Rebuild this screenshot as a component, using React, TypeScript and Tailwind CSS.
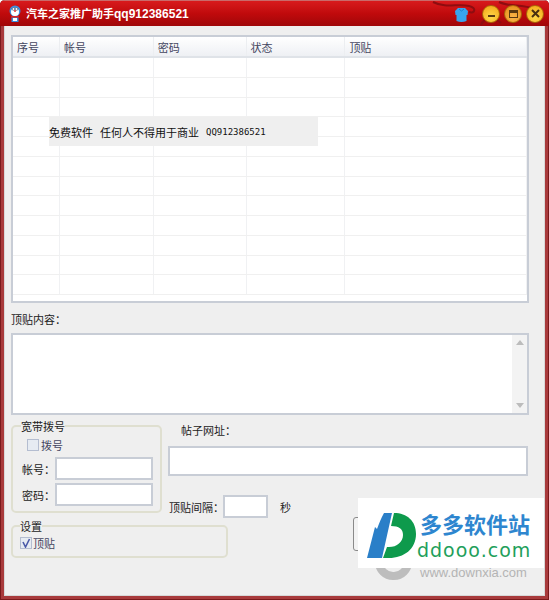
const cols = ["序号", "帐号", "密码", "状态", "顶贴"];
const colWidths = ["w-[47px]", "w-[94px]", "w-[93px]", "w-[99px]", "w-[182px]"];
const rows = Array.from({ length: 12 });

function Checkbox({ checked }: { checked?: boolean }) {
  return (
    <span className="flex h-[12px] w-[12px] shrink-0 items-center justify-center border border-[#b4bdd0] bg-[#e6ebf2]">
      {checked && (
        <svg width="10" height="10" viewBox="0 0 10 10">
          <path d="M2 4 L4.5 9 L8.5 1" fill="none" stroke="#4a5aa8" strokeWidth="1.6" />
        </svg>
      )}
    </span>
  );
}

function Field({ className }: { className: string }) {
  return <div className={`shrink-0 border-2 border-[#c8cdd6] bg-white ${className}`} />;
}

export default function App() {
  return (
    <div
      className="relative flex h-[600px] w-[549px] flex-col overflow-hidden rounded-t-[5px] bg-[#a83a3c] text-[11px] leading-[14px] text-[#222] shadow-[inset_0_0_0_1px_#7a1a1c]"
      style={{ fontFamily: "'Noto Sans CJK SC', 'Liberation Sans', sans-serif" }}
    >
      {/* title bar */}
      <div className="relative flex h-[26px] shrink-0 items-center border-t border-[#c96a6a] bg-gradient-to-b from-[#d81a1c] via-[#c00a0c] to-[#a00709] pl-[9px] pr-[5px]">
        <svg width="110" height="25" viewBox="0 0 110 25" className="absolute right-[10px] top-0" fill="none" stroke="#8e0d10" strokeWidth="2">
          <path d="M4 1 C18 8 28 2 40 5 C48 7 46 13 40 11" />
          <path d="M52 24 C56 14 68 18 72 22 M70 1 C80 6 92 3 106 8" />
        </svg>
        <svg width="12" height="18" viewBox="0 0 12 18" className="relative shrink-0">
          <circle cx="6" cy="6" r="5.5" fill="#3b8fe0" />
          <circle cx="6" cy="7" r="4" fill="#fff" />
          <circle cx="4.5" cy="4" r="1.4" fill="#fff" stroke="#124" strokeWidth=".5" />
          <circle cx="7.5" cy="4" r="1.4" fill="#fff" stroke="#124" strokeWidth=".5" />
          <circle cx="6" cy="6" r=".9" fill="#d22" />
          <rect x="2" y="11" width="8" height="1.6" fill="#d22" />
          <rect x="2.5" y="12.6" width="7" height="4.4" fill="#3b8fe0" />
          <rect x="4" y="13" width="4" height="3" fill="#fff" />
        </svg>
        <span className="relative ml-[5px] whitespace-nowrap text-[11px] font-bold text-white">
          汽车之家推广助手
          <span className="text-[12px]" style={{ fontFamily: "'Liberation Sans', sans-serif" }}>
            qq912386521
          </span>
        </span>
        <svg width="15" height="16" viewBox="0 0 15 16" className="relative ml-auto mr-[13px] mt-[2px]">
          <path d="M4 1 L11 1 L14 4 L13.5 8 L12.5 8 L12.5 14 Q7.5 16 2.5 14 L2.5 8 L1.5 8 L1 4 Z" fill="#38a4ee" />
          <path d="M5 2 L7.5 4 L10 2" fill="none" stroke="#1d7fc8" />
        </svg>
        <div className="relative flex gap-[4px]">
          <span className="flex h-[18px] w-[18px] items-center justify-center rounded-full border border-[#a86808] bg-[radial-gradient(circle_at_50%_70%,#ffd84a,#f2a414)]">
            <span className="mt-[5px] h-[2px] w-[7px] bg-[#5a3a10]" />
          </span>
          <span className="flex h-[18px] w-[18px] items-center justify-center rounded-full border border-[#a86808] bg-[radial-gradient(circle_at_50%_70%,#fbb64a,#e28a14)]">
            <span className="h-[8px] w-[9px] border border-t-[3px] border-[#5a3a10]" />
          </span>
          <span className="flex h-[18px] w-[18px] items-center justify-center rounded-full border border-[#a86808] bg-[radial-gradient(circle_at_50%_70%,#ffd84a,#f2a414)]">
            <svg width="9" height="9" viewBox="0 0 9 9">
              <path d="M1 1 L8 8 M8 1 L1 8" stroke="#4a3010" strokeWidth="2" />
            </svg>
          </span>
        </div>
      </div>

      {/* client area */}
      <div className="mx-[4px] mb-[4px] flex min-h-0 flex-1 flex-col border-b border-l border-r border-[#d8d8d8] bg-[#efefef] pl-[6px] pr-[15px] pt-[9px]">
        {/* list */}
        <div className="h-[268px] w-[518px] shrink-0 overflow-hidden border-2 border-[#c8cdd6] bg-white">
          <div className="flex h-[21px] border-b-2 border-[#dfe3e8] bg-gradient-to-b from-white to-[#eef0f4] text-[#44465f]">
            {cols.map((c, i) => (
              <div key={c} className={`${colWidths[i]} flex items-center border-r border-[#eceef1] pl-[4px]`}>
                {c}
              </div>
            ))}
          </div>
          {rows.map((_, r) => (
            <div key={r} className="flex h-[19.75px] border-b border-[#f0f0f0]">
              {cols.map((c, i) => (
                <div key={c} className={`${colWidths[i]} border-r border-[#f0f1f3]`} />
              ))}
            </div>
          ))}
        </div>

        <div className="mt-[9px] h-[14px]">顶贴内容：</div>

        <div className="mt-[7px] flex h-[82px] w-[518px] shrink-0 justify-end border-2 border-[#c8cdd6] bg-white">
          <div className="flex w-[15px] flex-col items-center justify-between bg-[#f3f3f3] py-[5px]">
            <span className="h-0 w-0 border-x-[4px] border-b-[5px] border-x-transparent border-b-[#bcbcbc]" />
            <span className="h-0 w-0 border-x-[4px] border-t-[5px] border-x-transparent border-t-[#bcbcbc]" />
          </div>
        </div>

        {/* bottom row 1 */}
        <div className="mt-[5px] flex h-[98px] shrink-0">
          <fieldset className="h-[93px] w-[151px] shrink-0 rounded-[5px] border-2 border-[#dfdfd0] pl-[8px]">
            <legend className="whitespace-nowrap text-[11px] leading-[12px]">宽带拨号</legend>
            <div className="ml-[6px] mt-[6px] flex items-center gap-[2px] text-[#44465f]">
              <Checkbox />
              拨号
            </div>
            <div className="mt-[5px] flex items-center">
              <span className="ml-[1px] w-[33px] shrink-0 whitespace-nowrap">帐号：</span>
              <Field className="h-[23px] w-[98px]" />
            </div>
            <div className="mt-[3px] flex items-center">
              <span className="ml-[1px] w-[33px] shrink-0 whitespace-nowrap">密码：</span>
              <Field className="h-[23px] w-[98px]" />
            </div>
          </fieldset>
          <div className="ml-[6px] flex w-[360px] flex-col">
            <div className="ml-[13px] mt-[3px] h-[14px]">帖子网址：</div>
            <Field className="mt-[9px] h-[30px] w-[360px]" />
            <div className="mt-[19px] flex items-center">
              <span className="ml-[1px] w-[54px] shrink-0 whitespace-nowrap">顶贴间隔：</span>
              <Field className="h-[23px] w-[45px]" />
              <span className="ml-[12px]">秒</span>
            </div>
          </div>
        </div>

        {/* bottom row 2 */}
        <div className="mt-[2px] flex shrink-0">
          <fieldset className="h-[38px] w-[217px] shrink-0 rounded-[5px] border-2 border-[#dfdfd0] pl-[7px]">
            <legend className="whitespace-nowrap text-[11px] leading-[12px]">设置</legend>
            <div className="mt-[4px] flex items-center gap-[1px] text-[#44465f]">
              <Checkbox checked />
              顶贴
            </div>
          </fieldset>
          <div className="ml-[125px] mt-[-3px] h-[34px] w-[70px] rounded-[3px] border border-[#8a8a8a] bg-[#f3f3f3]" />
        </div>
      </div>

      {/* notice over the list */}
      <div className="absolute left-[49px] top-[117px] flex h-[29px] w-[269px] items-center whitespace-nowrap bg-[#efefef] text-[#111]">
        免费软件
        <span className="ml-[7px]">任何人不得用于商业</span>
        <span className="ml-[7px] text-[9px]" style={{ fontFamily: "'DejaVu Sans Mono', monospace" }}>
          QQ912386521
        </span>
      </div>

      {/* downxia watermark */}
      <div className="absolute left-[375px] top-[562px] h-[18px] w-[37px] overflow-hidden">
        <div className="mt-[-18px] h-[36px] w-[37px] rounded-full border-[8px] border-[#bdbdbd]" />
      </div>
      <div
        className="absolute left-[420px] top-[566px] whitespace-nowrap text-[13px] leading-[14px] text-[#b4b4b4]"
        style={{ fontFamily: "'Liberation Sans', sans-serif" }}
      >
        www.downxia.com
      </div>

      {/* ddooo watermark */}
      <div className="absolute left-[358px] top-[498px] flex h-[70px] w-[186px] items-center bg-white pt-[6px]">
        <svg width="50" height="46" viewBox="0 0 50 46" className="ml-[9px] shrink-0">
          <path d="M25 0 L17 0 C14 5 12 11 10 16 L8 14 L0 45 L15 45 Z" fill="#2a7fc8" />
          <path d="M27 0 C40 0 49 8 49 21 C49 36 37 45 22 45 L16 45 L20 34 C29 35 36 29 36 22 C36 16 32 13 24 13 Z" fill="#0e9a4c" />
        </svg>
        <div className="flex flex-col">
          <span className="ml-[3px] text-[22px] font-bold leading-[24px] text-[#2e86cf]">多多软件站</span>
          <span
            className="mt-[4px] text-[19px] leading-[22px] tracking-[1px] text-[#1f9f5b]"
            style={{ fontFamily: "'DejaVu Sans', sans-serif" }}
          >
            ddooo.com
          </span>
        </div>
      </div>
    </div>
  );
}
